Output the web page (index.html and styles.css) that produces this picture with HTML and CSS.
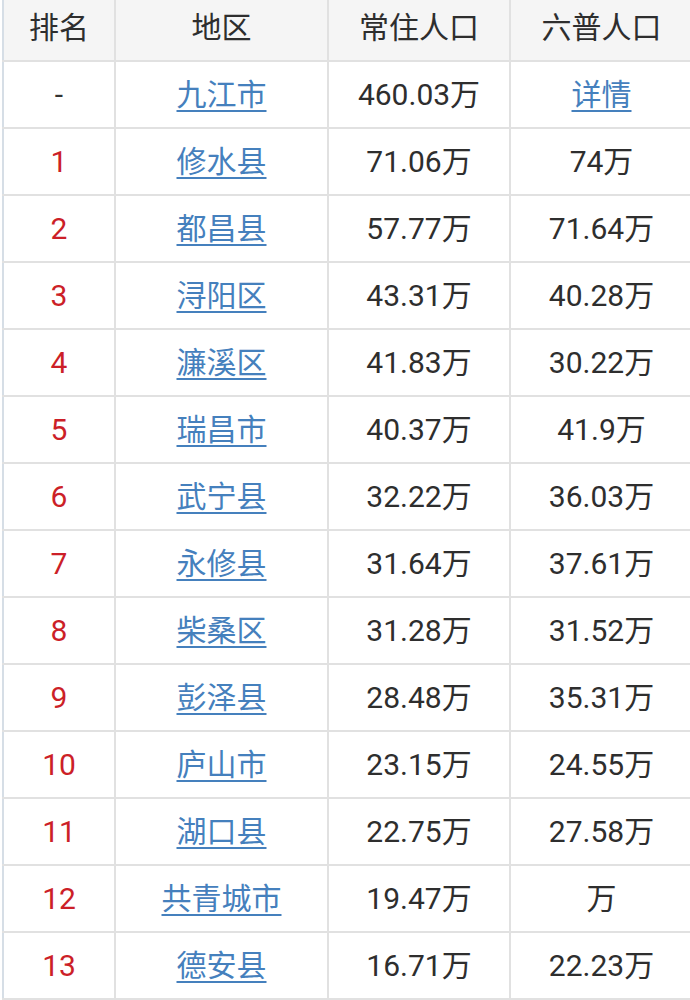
FILE: index.html
```html
<!DOCTYPE html>
<html lang="zh-CN">
<head>
<meta charset="utf-8">
<title>九江市人口</title>
<link rel="stylesheet" href="styles.css">
</head>
<body>
<div class="wrap">
<table class="pop">
<colgroup><col class="c1"><col class="c2"><col class="c3"><col class="c4"></colgroup>
<thead>
<tr><th>排名</th><th>地区</th><th>常住人口</th><th>六普人口</th></tr>
</thead>
<tbody>
<tr><td class="dash">-</td><td><a href="#">九江市</a></td><td>460.03万</td><td><a href="#">详情</a></td></tr>
<tr><td class="rank">1</td><td><a href="#">修水县</a></td><td>71.06万</td><td>74万</td></tr>
<tr><td class="rank">2</td><td><a href="#">都昌县</a></td><td>57.77万</td><td>71.64万</td></tr>
<tr><td class="rank">3</td><td><a href="#">浔阳区</a></td><td>43.31万</td><td>40.28万</td></tr>
<tr><td class="rank">4</td><td><a href="#">濂溪区</a></td><td>41.83万</td><td>30.22万</td></tr>
<tr><td class="rank">5</td><td><a href="#">瑞昌市</a></td><td>40.37万</td><td>41.9万</td></tr>
<tr><td class="rank">6</td><td><a href="#">武宁县</a></td><td>32.22万</td><td>36.03万</td></tr>
<tr><td class="rank">7</td><td><a href="#">永修县</a></td><td>31.64万</td><td>37.61万</td></tr>
<tr><td class="rank">8</td><td><a href="#">柴桑区</a></td><td>31.28万</td><td>31.52万</td></tr>
<tr><td class="rank">9</td><td><a href="#">彭泽县</a></td><td>28.48万</td><td>35.31万</td></tr>
<tr><td class="rank">10</td><td><a href="#">庐山市</a></td><td>23.15万</td><td>24.55万</td></tr>
<tr><td class="rank">11</td><td><a href="#">湖口县</a></td><td>22.75万</td><td>27.58万</td></tr>
<tr><td class="rank">12</td><td><a href="#">共青城市</a></td><td>19.47万</td><td>万</td></tr>
<tr><td class="rank">13</td><td><a href="#">德安县</a></td><td>16.71万</td><td>22.23万</td></tr>
</tbody>
</table>
</div>
</body>
</html>
```
FILE: styles.css
```css
html, body {
  margin: 0;
  padding: 0;
  background: #ffffff;
}
.wrap {
  width: 690px;
  height: 1000px;
  overflow: hidden;
  padding-left: 2px;
  box-sizing: border-box;
}
.pop {
  border-collapse: collapse;
  table-layout: fixed;
  width: 690px;
  margin-top: -7px;
  font-family: Roboto, "Noto Sans CJK SC", sans-serif;
  font-size: 30px;
  color: #2e2e2e;
}
.c1 { width: 112px; }
.c2 { width: 213px; }
.c3 { width: 182px; }
.c4 { width: 183px; }
.pop th, .pop td {
  border: 2px solid #e1e1e1;
  text-align: center;
  vertical-align: middle;
  padding: 0;
  height: 65px;
  line-height: 1;
  font-weight: normal;
}
.pop tr > :first-child {
  border-left-color: #d6dee6;
}
.pop th {
  background: #f5f5f5;
  height: 65px;
}
.pop a {
  color: #4580bd;
  text-decoration: underline;
  text-decoration-thickness: 2px;
  text-underline-offset: 5px;
}
.rank {
  color: #cc1f28;
}
.dash {
  color: #333333;
}
```
